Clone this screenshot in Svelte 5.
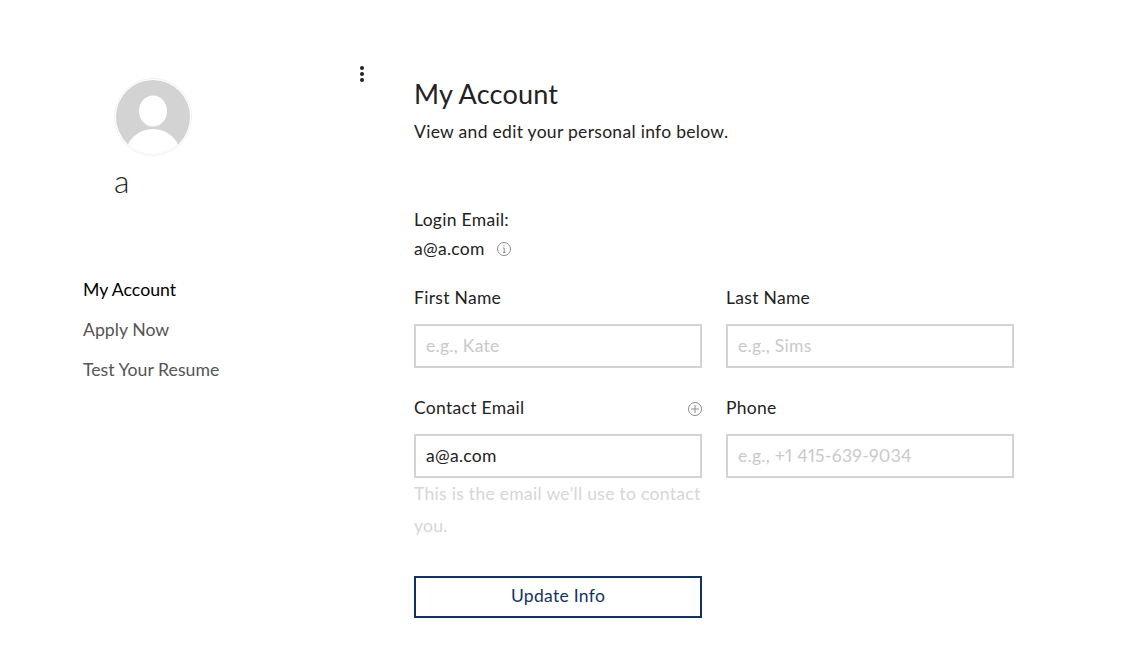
<script lang="ts">
	const nav = [
		{ label: 'My Account', active: true },
		{ label: 'Apply Now', active: false },
		{ label: 'Test Your Resume', active: false }
	];
</script>

<div class="page">
	<aside class="sidebar">
		<div class="top">
			<div class="profile">
				<svg class="avatar" width="78" height="80" viewBox="0 0 78 80" aria-hidden="true">
					<defs>
						<clipPath id="disc"><circle cx="39" cy="40" r="37" /></clipPath>
					</defs>
					<circle cx="39" cy="40" r="38.5" fill="#fff" stroke="#f1f1f1" stroke-width="1" />
					<g clip-path="url(#disc)">
						<rect width="78" height="80" fill="#d3d3d3" />
						<ellipse cx="39" cy="34" rx="14" ry="15.5" fill="#fff" />
						<ellipse cx="39" cy="79" rx="28" ry="27" fill="#fff" />
					</g>
				</svg>
				<div class="name">a</div>
			</div>
			<button class="kebab" aria-label="More actions">
				<span></span><span></span><span></span>
			</button>
		</div>
		<nav class="menu">
			{#each nav as item}
				<a href="#top" class:active={item.active}>{item.label}</a>
			{/each}
		</nav>
	</aside>

	<main class="content">
		<h1>My Account</h1>
		<p class="intro">View and edit your personal info below.</p>

		<div class="login">
			<div>Login Email:</div>
			<div class="login-value">
				a@a.com
				<svg width="14" height="14" viewBox="0 0 14 14" aria-hidden="true">
					<circle cx="7" cy="7" r="6.5" fill="none" stroke="#8c8c8c" />
					<path d="M6 6h1.2v4.2M6 10.4h2.4M7 3.4v1.2" fill="none" stroke="#8c8c8c" />
				</svg>
			</div>
		</div>

		<form class="fields" onsubmit={(e) => e.preventDefault()}>
			<div class="field">
				<label for="first">First Name</label>
				<input id="first" placeholder="e.g., Kate" />
			</div>
			<div class="field">
				<label for="last">Last Name</label>
				<input id="last" placeholder="e.g., Sims" />
			</div>
			<div class="field">
				<div class="label-row">
					<label for="email">Contact Email</label>
					<svg width="14" height="14" viewBox="0 0 14 14" aria-hidden="true">
						<circle cx="7" cy="7" r="6.5" fill="none" stroke="#8c8c8c" />
						<path d="M7 3v8M3 7h8" fill="none" stroke="#8c8c8c" />
					</svg>
				</div>
				<input id="email" value="a@a.com" />
				<p class="hint">This is the email we’ll use to contact you.</p>
			</div>
			<div class="field">
				<label for="phone">Phone</label>
				<input id="phone" placeholder="e.g., +1 415-639-9034" />
			</div>
			<button class="update" type="submit">Update Info</button>
		</form>
	</main>
</div>

<style>
	:global(body) {
		margin: 0;
		background: #fff;
	}

	.page {
		display: flex;
		height: 664px;
		overflow: hidden;
		color: #222;
		font-family: Lato, 'Open Sans', sans-serif;
		font-size: 17.5px;
		letter-spacing: 0.3px;
	}

	.sidebar {
		width: 414px;
		padding-left: 83px;
		box-sizing: border-box;
		flex: none;
	}

	.top {
		display: flex;
		height: 270px;
		padding-top: 77px;
		box-sizing: border-box;
	}

	.profile {
		padding-left: 31px;
		width: 248px;
		box-sizing: border-box;
		flex: none;
	}

	.avatar {
		display: block;
	}

	.name {
		margin-top: 4px;
		font-size: 32px;
		line-height: 40px;
		font-weight: 300;
		letter-spacing: 0;
		color: #222;
	}

	.kebab {
		flex: none;
		display: flex;
		flex-direction: column;
		gap: 2px;
		height: 16px;
		margin: -11px 0 0 29px;
		padding: 0;
		border: 0;
		background: none;
	}

	.kebab span {
		display: block;
		width: 4px;
		height: 4px;
		border-radius: 50%;
		background: #222;
	}

	.menu {
		display: flex;
		flex-direction: column;
	}

	.menu a {
		font-size: 17.7px;
		line-height: 40px;
		letter-spacing: 0;
		color: #555;
		text-decoration: none;
		white-space: nowrap;
	}

	.menu a.active {
		color: #000;
	}

	.content {
		width: 600px;
		padding-top: 74px;
		box-sizing: border-box;
	}

	h1 {
		margin: 0 0 2px;
		font-size: 27px;
		line-height: 40px;
		font-weight: 400;
		letter-spacing: 0.2px;
		color: #222;
	}

	.intro {
		margin: 0;
		line-height: 32px;
	}

	.login {
		margin-top: 57px;
		line-height: 29px;
	}

	.login-value {
		display: flex;
		align-items: center;
		gap: 12px;
	}

	.fields {
		display: grid;
		grid-template-columns: 288px 288px;
		column-gap: 24px;
		margin-top: 20px;
	}

	.field {
		min-width: 0;
	}

	.field:nth-child(-n + 2) {
		height: 110px;
	}

	label {
		display: block;
		line-height: 30px;
		height: 30px;
	}

	.label-row {
		display: flex;
		justify-content: space-between;
		align-items: center;
	}

	.label-row svg {
		margin-top: 2px;
	}

	input {
		display: block;
		width: 100%;
		height: 44px;
		margin-top: 11px;
		padding: 0 10px 2px;
		box-sizing: border-box;
		border: 2px solid #d3d3d3;
		border-radius: 0;
		outline: 0;
		background: #fff;
		color: #222;
		font: 17.5px Lato, 'Open Sans', sans-serif;
		font-variant-numeric: proportional-nums;
		letter-spacing: 0.3px;
	}

	input::placeholder {
		color: #c9c9c9;
		opacity: 1;
	}

	.hint {
		margin: 0;
		line-height: 32px;
		color: #d6d6d6;
	}

	.update {
		grid-column: 1;
		height: 42px;
		margin-top: 34px;
		padding: 0 0 3px;
		border: 2px solid #12335f;
		background: #fff;
		color: #12335f;
		font: 17.5px Lato, 'Open Sans', sans-serif;
		letter-spacing: 0.3px;
	}
</style>
